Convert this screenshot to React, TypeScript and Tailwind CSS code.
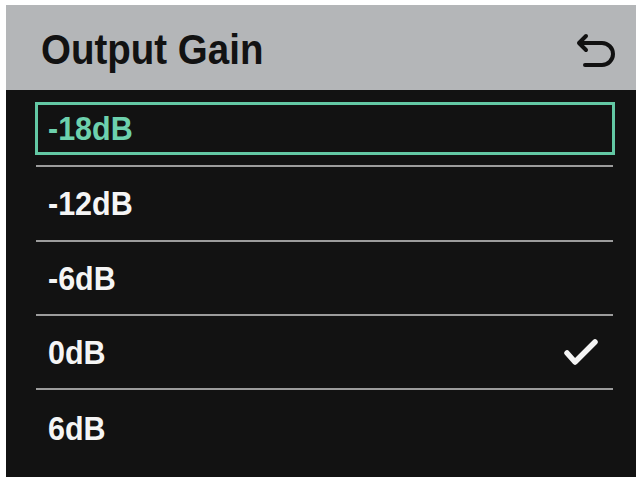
import React from 'react';

const options = ['-18dB', '-12dB', '-6dB', '0dB', '6dB'];
const selectedIndex = 0;
const checkedIndex = 3;

// row heights measured from the device screen
const rowHeights = ['h-[75px]', 'h-[73px]', 'h-[72px]', 'h-[72px]', 'h-[87px]'];

const BackIcon = () => (
  <svg width="42" height="40" viewBox="0 0 42 40" fill="none">
    <path
      d="M11 5 L4 12 L11 19 M4 12 H27 A11 11 0 0 1 27 34 H10"
      stroke="#111"
      strokeWidth="4"
      strokeLinecap="round"
      strokeLinejoin="round"
    />
  </svg>
);

const CheckIcon = () => (
  <svg width="38" height="32" viewBox="0 0 38 32" fill="none">
    <path
      d="M5 17 L13 26 L33 6"
      stroke="#f4f4f4"
      strokeWidth="5.5"
      strokeLinecap="round"
      strokeLinejoin="round"
    />
  </svg>
);

export default function App() {
  return (
    <div className="w-[640px] h-[481px] bg-white pt-[5px] pl-[6px] font-['Liberation_Sans',Arial,sans-serif]">
      <div className="w-[630px] h-[472px] bg-[#121212] flex flex-col">
        {/* ヘッダー */}
        <div className="h-[85px] bg-[#b4b6b8] flex items-center justify-between pl-[35px] pr-[19px]">
          <h1 className="inline-block mt-[5px] scale-y-[1.1] text-[38.5px] font-bold text-[#121212] leading-none">
            Output Gain
          </h1>
          <div className="mt-[6px]">
            <BackIcon />
          </div>
        </div>

        {/* 選択肢リスト */}
        <div className="pl-[30px] pr-[23px] flex flex-col">
          {options.map((opt, i) => (
            <div key={opt}>
              {i > 0 && <div className="h-[2px] bg-[#9c9c9c]" />}
              <div className={`${rowHeights[i]} flex flex-col`}>
                {i === selectedIndex ? (
                  <div className="mt-[12px] -ml-[1px] -mr-[2px] h-[53px] border-[3px] border-[#63c8a4] flex items-center pl-[10px]">
                    <span className="inline-block scale-y-[1.08] text-[30.5px] font-bold text-[#6dd1ad] leading-none">
                      {opt}
                    </span>
                  </div>
                ) : (
                  <div
                    className={`flex items-center justify-between pl-[12px] pr-[13px] ${
                      i === options.length - 1 ? 'h-[76px]' : 'h-full'
                    }`}
                  >
                    <span className="inline-block scale-y-[1.08] text-[30.5px] font-bold text-[#f5f5f5] leading-none">
                      {opt}
                    </span>
                    {i === checkedIndex && <CheckIcon />}
                  </div>
                )}
              </div>
            </div>
          ))}
        </div>
      </div>
    </div>
  );
}
